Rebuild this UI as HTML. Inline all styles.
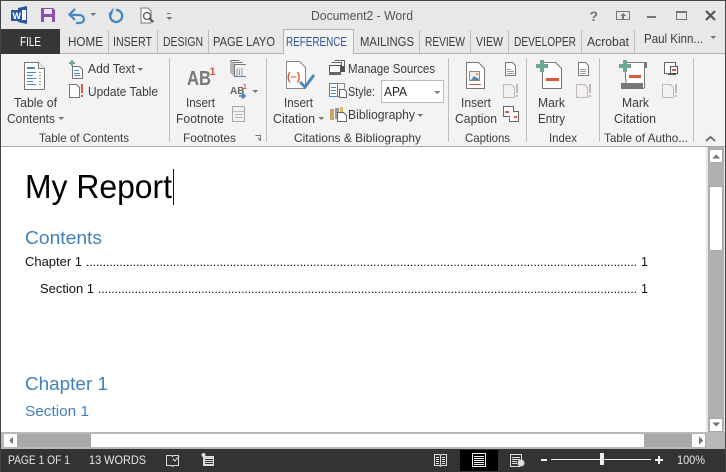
<!DOCTYPE html>
<html><head><meta charset="utf-8"><style>
html,body{margin:0;padding:0;width:726px;height:472px;overflow:hidden;background:#fff}
svg{display:block}
text{font-family:"Liberation Sans",sans-serif;font-size:12.5px;fill:#3c3c3c;white-space:pre}
.s{font-size:12px}
.b{fill:#4180bd;font-size:18.5px}
.w{fill:#e6e6e6;font-size:12px}
.sep{stroke:#bdbdbd;stroke-width:1}
.ar{fill:#777}
</style></head><body>
<svg width="726" height="472" viewBox="0 0 726 472" xmlns="http://www.w3.org/2000/svg" shape-rendering="crispEdges">
<rect width="726" height="472" fill="#fff"/>
<rect width="726" height="53" fill="#e8e8e8"/>
<rect y="53" width="726" height="93" fill="#f3f3f3"/>
<rect y="146" width="726" height="1" fill="#a8a8a8"/>
<rect y="53" width="726" height="1" fill="#b5b5b5"/>
<rect y="29" width="60" height="25" fill="#363636"/>

<!-- QAT -->
<g shape-rendering="auto">
<path d="M18 8l9-2v18l-9-2z" fill="#2a5699"/><rect x="11" y="10" width="10" height="11" fill="#2a5699"/><rect x="22" y="10" width="4" height="10" fill="#fff"/>
<text x="12.500" y="19" style="font-size:9px;font-weight:bold;fill:#fff">W</text>
<path d="M41 8h12l2 2v12H41z" fill="#8d4eb0"/><rect x="44" y="9" width="8" height="5" fill="#e8e8e8"/><rect x="44" y="17" width="8" height="5" fill="#e8e8e8"/>
<path d="M71 15h8c5 0 5 4.500 5 4.500S84 23 79 23h-3" fill="none" stroke="#4a86c0" stroke-width="2.200"/><path d="M75 9l-5.500 5.500L75 20" fill="none" stroke="#4a86c0" stroke-width="2.200"/>
<path d="M116 10a6 6 0 1 1-5 3" fill="none" stroke="#4a86c0" stroke-width="2.400"/><path d="M113 7l0 8h-4z" fill="#4a86c0" transform="rotate(15 112 11)"/>
<path d="M141 8h7l3 3v12h-10z" fill="#fff" stroke="#777"/><circle cx="147" cy="16" r="3.500" fill="#fff" stroke="#555" stroke-width="1.200"/><path d="M149.500 18.500l4 3.500" stroke="#555" stroke-width="2"/>
</g>
<path class="ar" d="M90 13h6l-3 3z"/>
<path class="ar" d="M166 17h6l-3 3z"/><rect x="167" y="13" width="4" height="1" fill="#777"/>

<text x="311" y="20" textLength="102" lengthAdjust="spacingAndGlyphs" style="fill:#555">Document2 - Word</text>

<!-- window controls -->
<text x="589.500" y="21" style="font-size:14px;font-weight:bold;fill:#777">?</text>
<rect x="616.500" y="11.500" width="13" height="8" fill="none" stroke="#777"/><path d="M623 13l3 3h-6z" fill="#777"/><rect x="622" y="15" width="2" height="4" fill="#777"/>
<rect x="647" y="16" width="9" height="2" fill="#777"/>
<rect x="676.500" y="11.500" width="10" height="8" fill="none" stroke="#777"/><rect x="676" y="11" width="11" height="2" fill="#777"/>
<path d="M706 11l9 9M715 11l-9 9" stroke="#555" stroke-width="2.200" shape-rendering="auto"/>

<!-- tabs -->
<text x="20" y="46" textLength="21" lengthAdjust="spacingAndGlyphs" style="fill:#fff">FILE</text>
<text x="68" y="46" textLength="35" lengthAdjust="spacingAndGlyphs">HOME</text>
<text x="113" y="46" textLength="39" lengthAdjust="spacingAndGlyphs">INSERT</text>
<text x="163" y="46" textLength="40" lengthAdjust="spacingAndGlyphs">DESIGN</text>
<text x="213" y="46" textLength="62" lengthAdjust="spacingAndGlyphs">PAGE LAYO</text>
<path d="M283.500 54V29.500H353.500V54" fill="#f3f3f3" stroke="#b5b5b5"/><rect x="284" y="53" width="69" height="2" fill="#f3f3f3"/>
<text x="286" y="46" textLength="61" lengthAdjust="spacingAndGlyphs" style="fill:#2b579a">REFERENCE</text>
<text x="360" y="46" textLength="54" lengthAdjust="spacingAndGlyphs">MAILINGS</text>
<text x="425" y="46" textLength="40" lengthAdjust="spacingAndGlyphs">REVIEW</text>
<text x="476" y="46" textLength="27" lengthAdjust="spacingAndGlyphs">VIEW</text>
<text x="514" y="46" textLength="62" lengthAdjust="spacingAndGlyphs">DEVELOPER</text>
<text x="587" y="46" textLength="42" lengthAdjust="spacingAndGlyphs">Acrobat</text>
<text x="644" y="43" textLength="59" lengthAdjust="spacingAndGlyphs">Paul Kinn...</text>
<path class="ar" d="M710 36h6l-3 3z"/>
<g class="sep"><path d="M108.500 30v23M157.500 30v23M208.500 30v23M419.500 30v23M470.500 30v23M508.500 30v23M581.500 30v23M634.500 30v23"/></g>
<!-- group separators -->
<g class="sep"><path d="M169.500 58v84M266.500 58v84M448.500 58v84M526.500 58v84M599.500 58v84M693.500 58v84"/></g>

<!-- Table of contents -->
<path d="M24.500 62.500h14l6 6v21h-20z" fill="#fff" stroke="#777"/><path d="M38.500 62.500v6h6" fill="#eee" stroke="#777"/>
<rect x="27" y="67" width="8" height="2" fill="#4a86c0"/>
<g fill="#4a86c0"><rect x="27" y="72" width="9" height="1"/><rect x="27" y="75" width="6" height="1"/><rect x="27" y="78" width="9" height="1"/><rect x="27" y="81" width="6" height="1"/><rect x="27" y="84" width="9" height="1"/></g>
<g fill="#999"><rect x="39" y="72" width="2" height="1"/><rect x="39" y="75" width="2" height="1"/><rect x="39" y="78" width="2" height="1"/><rect x="39" y="81" width="2" height="1"/><rect x="39" y="84" width="2" height="1"/></g>
<text x="14" y="107" textLength="43" lengthAdjust="spacingAndGlyphs">Table of</text>
<text x="7" y="123" textLength="48" lengthAdjust="spacingAndGlyphs">Contents</text>
<path class="ar" d="M58 117h6l-3 3z"/>
<path d="M72.500 66.500h7l3 3v9h-10z" fill="#fff" stroke="#777"/><rect x="69" y="62" width="6" height="2" fill="#6fa890"/><rect x="71" y="60" width="2" height="6" fill="#6fa890"/>
<g fill="#4a86c0"><rect x="74" y="70" width="5" height="1"/><rect x="74" y="73" width="6" height="1"/><rect x="74" y="75" width="6" height="1"/></g>
<text x="88" y="73" textLength="47" lengthAdjust="spacingAndGlyphs">Add Text</text>
<path class="ar" d="M137 68h6l-3 3z"/>
<path d="M69.500 84.500h7l3 3v10h-10z" fill="#fff" stroke="#777"/><rect x="81" y="84" width="2" height="9" fill="#d9593d"/><rect x="81" y="95" width="2" height="2" fill="#d9593d"/>
<text x="88" y="96" textLength="70" lengthAdjust="spacingAndGlyphs">Update Table</text>
<text x="39" y="142" class="s" textLength="90" lengthAdjust="spacingAndGlyphs">Table of Contents</text>

<!-- Footnotes -->
<text x="187" y="85" textLength="24" lengthAdjust="spacingAndGlyphs" style="font-size:20px;font-weight:bold;fill:#777">AB</text>
<text x="209.500" y="75" style="font-size:11px;font-weight:bold;fill:#d9593d">1</text>
<text x="186" y="107" textLength="29" lengthAdjust="spacingAndGlyphs">Insert</text>
<text x="176" y="123" textLength="48" lengthAdjust="spacingAndGlyphs">Footnote</text>
<text x="183" y="142" class="s" textLength="53" lengthAdjust="spacingAndGlyphs">Footnotes</text>
<path d="M230.500 60.500h9M231 60.500v13M232.500 62.500h10M233 62.500v13M234.500 64.500h11v12h-11z" fill="none" stroke="#777"/><rect x="235" y="65" width="11" height="11" fill="#f3f3f3"/>
<text x="236" y="75" style="font-size:9px;fill:#4a86c0">[i]</text>
<text x="230" y="94" style="font-size:10px;font-weight:bold;fill:#666">AB</text>
<text x="243" y="89" style="font-size:7px;font-weight:bold;fill:#d9593d">1</text>
<path d="M239 96h5M242 93.500l3 2.500-3 2.500" stroke="#4a86c0" stroke-width="1.800" fill="none" shape-rendering="auto"/>
<path class="ar" d="M252 90h6l-3 3z"/>
<rect x="232.500" y="106.500" width="12" height="15" fill="#f3eff3" stroke="#aaa"/><path d="M233 111.500h11M235 114.500h8M235 117.500h8" stroke="#bbb"/>
<path d="M255.500 135.500h5v5M258 138l3 3" stroke="#777" fill="none"/>

<!-- Citations -->
<path d="M286.500 61.500h13l6 6v21h-19z" fill="#fff" stroke="#888"/>
<text x="287" y="80" style="font-size:11px;font-weight:bold;fill:#d9593d">(–)</text>
<path d="M300 82l5 5 9-12" fill="none" stroke="#4a86c0" stroke-width="3" shape-rendering="auto"/>
<text x="284" y="107" textLength="29" lengthAdjust="spacingAndGlyphs">Insert</text>
<text x="273" y="123" textLength="42" lengthAdjust="spacingAndGlyphs">Citation</text>
<path class="ar" d="M318 117h6l-3 3z"/>
<path d="M334.500 60.500h10v8M331.500 62.500h10v6" fill="none" stroke="#666"/><rect x="329.500" y="65.500" width="11" height="9" fill="#fff" stroke="#555"/><rect x="329" y="72" width="12" height="3" fill="#666"/><rect x="341" y="66" width="4" height="6" fill="#555"/>
<rect x="329.500" y="83.500" width="8" height="13" fill="#fff" stroke="#4a86c0"/><path d="M331 87.500h5M331 90.500h5M331 93.500h5" stroke="#4a86c0"/><path d="M338.500 83.500h6v5M338 96.500h6" fill="none" stroke="#888"/><path d="M339.500 89.500h5l2 2v6h-7z" fill="#fff" stroke="#666"/>
<text x="348" y="73" textLength="87" lengthAdjust="spacingAndGlyphs">Manage Sources</text>
<text x="348" y="96" textLength="27" lengthAdjust="spacingAndGlyphs">Style:</text>
<rect x="381.500" y="80.500" width="62" height="22" fill="#fff" stroke="#bdbdbd"/>
<text x="384" y="96" textLength="23" lengthAdjust="spacingAndGlyphs" style="fill:#222">APA</text>
<path class="ar" d="M434 91h6l-3 3z"/>
<rect x="330" y="109" width="4" height="11" fill="#c9a66b"/><rect x="335" y="108" width="4" height="11" fill="#999"/><rect x="340" y="107" width="3" height="6" fill="#e0b86a"/>
<path d="M337.500 112.500h6l3 3v6h-9z" fill="#fff" stroke="#666"/>
<text x="348" y="119" textLength="67" lengthAdjust="spacingAndGlyphs">Bibliography</text>
<path class="ar" d="M417 114h6l-3 3z"/>
<text x="294" y="142" class="s" textLength="127" lengthAdjust="spacingAndGlyphs">Citations &amp; Bibliography</text>

<!-- Captions -->
<path d="M466.500 62.500h12l6 6v20h-18z" fill="#fff" stroke="#777"/>
<rect x="469.500" y="71.500" width="10" height="9" fill="#eee" stroke="#888"/><path d="M471 80l3-4 2 2 1-1 2 3z" fill="#4a86c0"/><rect x="476" y="73" width="2" height="2" fill="#e0a040"/>
<rect x="469" y="84" width="12" height="1" fill="#d9593d"/>
<path d="M505.500 62.500h7l3 3v10h-10z" fill="#fff" stroke="#777"/><path d="M507 69.500h4M507 71.500h7M507 73.500h7" stroke="#999"/>
<path d="M503.500 84.500h8l3 3v10h-11z" fill="#f3eff3" stroke="#bbb"/><rect x="516" y="84" width="2" height="9" fill="#bbb"/><rect x="516" y="95" width="2" height="2" fill="#bbb"/>
<rect x="503.500" y="106.500" width="10" height="10" fill="#fff" stroke="#666"/><rect x="505" y="111" width="4" height="2" fill="#d9593d"/><path d="M514 111.500h4.500v10h-9v-4" fill="#fff" stroke="#666"/><rect x="514" y="116" width="3" height="2" fill="#d9593d"/>
<text x="461" y="107" textLength="30" lengthAdjust="spacingAndGlyphs">Insert</text>
<text x="455" y="123" textLength="42" lengthAdjust="spacingAndGlyphs">Caption</text>
<text x="465" y="142" class="s" textLength="45" lengthAdjust="spacingAndGlyphs">Captions</text>

<!-- Index -->
<path d="M542.500 62.500h13l6 6v20h-19z" fill="#fff" stroke="#777"/>
<rect x="536" y="64" width="12" height="4" fill="#6fa890"/><rect x="540" y="60" width="4" height="12" fill="#6fa890"/>
<rect x="546" y="78" width="13" height="3" fill="#d9593d"/>
<text x="538" y="107" textLength="27" lengthAdjust="spacingAndGlyphs">Mark</text>
<text x="538" y="123" textLength="27" lengthAdjust="spacingAndGlyphs">Entry</text>
<text x="549" y="142" class="s" textLength="28" lengthAdjust="spacingAndGlyphs">Index</text>
<path d="M578.500 62.500h7l3 3v10h-10z" fill="#fff" stroke="#777"/><path d="M580 69.500h6M580 71.500h6M580 73.500h6" stroke="#999"/>
<path d="M576.500 84.500h8l3 3v10h-11z" fill="#f3eff3" stroke="#bbb"/><rect x="589" y="84" width="2" height="9" fill="#bbb"/><rect x="589" y="95" width="2" height="2" fill="#bbb"/>

<!-- Table of Authorities -->
<path d="M624.500 62.500h20v24c0 2-1 2-2 2h-16z" fill="#fff" stroke="#777"/><rect x="621" y="83" width="22" height="6" fill="#777"/><rect x="644" y="62" width="3" height="6" fill="#777"/>
<rect x="619" y="64" width="12" height="4" fill="#6fa890"/><rect x="623" y="60" width="4" height="12" fill="#6fa890"/>
<rect x="629" y="75" width="12" height="3" fill="#d9593d"/>
<text x="622" y="107" textLength="27" lengthAdjust="spacingAndGlyphs">Mark</text>
<text x="614" y="123" textLength="42" lengthAdjust="spacingAndGlyphs">Citation</text>
<text x="604" y="142" class="s" textLength="84" lengthAdjust="spacingAndGlyphs">Table of Autho...</text>
<rect x="664.500" y="62.500" width="11" height="11" fill="#fff" stroke="#666"/><rect x="670.500" y="66.500" width="7" height="7" fill="#fff" stroke="#555"/><rect x="672" y="69" width="4" height="2" fill="#d9593d"/><rect x="668" y="74" width="8" height="1" fill="#555"/>
<path d="M662.500 84.500h8l3 3v10h-11z" fill="#f3eff3" stroke="#bbb"/><rect x="675" y="84" width="2" height="9" fill="#bbb"/><rect x="675" y="95" width="2" height="2" fill="#bbb"/>
<path d="M706 141l4.500-4 4.500 4" fill="none" stroke="#666" stroke-width="1.800" shape-rendering="auto"/>

<!-- Document -->
<text x="25" y="198" textLength="147" lengthAdjust="spacingAndGlyphs" style="font-size:33.500px;fill:#000">My Report</text>
<rect x="173" y="169" width="1" height="36" fill="#111"/>
<text x="25" y="244" class="b" textLength="77" lengthAdjust="spacingAndGlyphs">Contents</text>
<text x="25" y="266" textLength="57" lengthAdjust="spacingAndGlyphs" style="fill:#111;font-size:13px">Chapter 1</text>
<text x="86" y="266" textLength="551" lengthAdjust="spacing" style="fill:#000;font-size:12px">.....................................................................................................................................................................</text>
<text x="641" y="266" style="fill:#111">1</text>
<text x="40" y="293" textLength="54" lengthAdjust="spacingAndGlyphs" style="fill:#111;font-size:13px">Section 1</text>
<text x="98" y="293" textLength="539" lengthAdjust="spacing" style="fill:#000;font-size:12px">..................................................................................................................................................................</text>
<text x="641" y="293" style="fill:#111">1</text>
<text x="25" y="390" class="b" textLength="83" lengthAdjust="spacingAndGlyphs">Chapter 1</text>
<text x="25" y="416" class="b" textLength="64" lengthAdjust="spacingAndGlyphs" style="font-size:15px">Section 1</text>

<!-- vertical scrollbar -->
<rect x="706" y="147" width="19" height="286" fill="#e6e6e6"/>
<rect x="708" y="147" width="16" height="286" fill="#b0b0b0"/>
<rect x="709.500" y="149.500" width="13" height="13" fill="#fff" stroke="#a8a8a8"/>
<path d="M712 158.500l4-4 4 4z" fill="#777"/>
<rect x="709.500" y="186.500" width="13" height="64" fill="#fff" stroke="#a8a8a8"/>
<rect x="709.500" y="418.500" width="13" height="13" fill="#fff" stroke="#a8a8a8"/>
<path d="M712 422.500h8l-4 4z" fill="#777"/>

<!-- horizontal scrollbar -->
<rect x="0" y="432" width="726" height="17" fill="#b8b8b8"/>
<rect x="4" y="434" width="702" height="13" fill="#a8a8a8"/>
<rect x="4" y="434" width="13" height="13" fill="#fff"/>
<path d="M13 436.500v8l-4-4z" fill="#777"/>
<rect x="91" y="434" width="553" height="13" fill="#fff"/>
<rect x="692" y="434" width="13" height="13" fill="#fff"/>
<path d="M699 436.500v8l4-4z" fill="#777"/>

<!-- status bar -->
<rect y="449" width="726" height="23" fill="#333"/>
<text x="8" y="464" class="w" textLength="62" lengthAdjust="spacingAndGlyphs">PAGE 1 OF 1</text>
<text x="89" y="464" class="w" textLength="57" lengthAdjust="spacingAndGlyphs">13 WORDS</text>
<path d="M166.500 455.500h5l1 1 1-1h5v10h-5l-1 1-1-1h-5z" fill="none" stroke="#ddd"/><path d="M173 459l2 2 4-5" fill="none" stroke="#ddd"/>
<circle cx="203.500" cy="455" r="2" fill="#ddd" shape-rendering="auto"/>
<rect x="203" y="456" width="11" height="10" fill="#ddd"/><path d="M205 459.500h8M205 461.500h8M205 463.500h8" stroke="#333"/>
<path d="M434.500 454.500h5l1 1 1-1h5v11h-5l-1 1-1-1h-5zM440.500 456v9" fill="none" stroke="#ddd"/><path d="M436 457.500h3M436 459.500h3M436 461.500h3M436 463.500h3M442 457.500h3M442 459.500h3M442 461.500h3M442 463.500h3" stroke="#ddd"/>
<rect x="460" y="450" width="38" height="21" fill="#000"/>
<rect x="472.500" y="453.500" width="13" height="13" fill="none" stroke="#eee"/><path d="M474 456.500h10M474 458.500h10M474 460.500h10M474 462.500h10M474 464.500h10" stroke="#eee"/>
<path d="M510.500 454.500h11v8h-2v4h-9z" fill="none" stroke="#ddd"/><path d="M512 457.500h8M512 459.500h8M512 461.500h5M512 463.500h5" stroke="#ddd"/><circle cx="521" cy="463" r="3.500" fill="#ddd" shape-rendering="auto"/>
<rect x="541" y="459" width="6" height="2" fill="#eee"/>
<rect x="551" y="459" width="100" height="1" fill="#eee"/>
<rect x="600" y="453" width="4" height="12" fill="#eee"/>
<rect x="655" y="459" width="8" height="2" fill="#eee"/><rect x="658" y="456" width="2" height="8" fill="#eee"/>
<text x="677" y="464" class="w" textLength="28" lengthAdjust="spacingAndGlyphs">100%</text>

<!-- window border -->
<rect x="0" y="0" width="726" height="1" fill="#444"/>
<rect x="0" y="0" width="1" height="472" fill="#444"/>
<rect x="725" y="0" width="1" height="472" fill="#444"/>
</svg>
</body></html>
